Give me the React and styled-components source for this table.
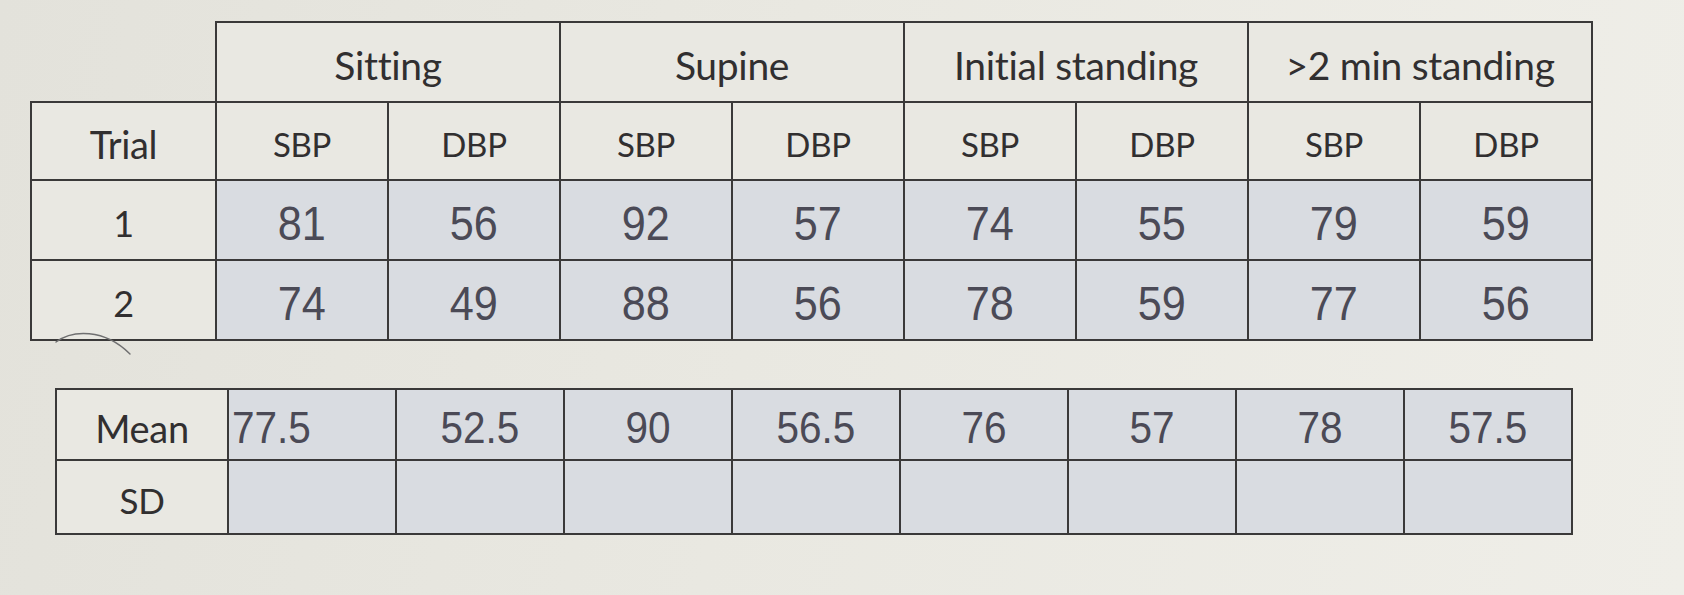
import React from 'react';
import styled, { createGlobalStyle } from 'styled-components';

const GlobalStyle = createGlobalStyle`
  html, body {
    margin: 0;
    padding: 0;
  }
  body {
    width: 1684px;
    height: 595px;
    overflow: hidden;
    background: linear-gradient(100deg, #e3e2db 0%, #e9e8e1 45%, #efeee8 100%);
  }
`;

const groups = ['Sitting', 'Supine', 'Initial standing', '>2 min standing'];

const trials = [
  { label: '1', values: [81, 56, 92, 57, 74, 55, 79, 59] },
  { label: '2', values: [74, 49, 88, 56, 78, 59, 77, 56] },
];

const means = ['77.5', '52.5', '90', '56.5', '76', '57', '78', '57.5'];

const MAIN_LABEL = 185;
const MAIN_COL = 172;
const STAT_LABEL = 172;
const STAT_COL = 168;

const Page = styled.div`
  position: relative;
  width: 1684px;
  height: 595px;
  padding: 21px 0 0 30px;
  box-sizing: border-box;
`;

const Sheet = styled.div`
  display: flex;
  flex-direction: column;
  align-items: flex-start;
  gap: 47px;
`;

const Table = styled.table`
  border-collapse: collapse;
  table-layout: fixed;
  width: ${p => p.$width}px;
  margin-left: ${p => p.$indent || 0}px;
`;

const Cell = styled.td`
  border: 2px solid #3a3939;
  height: ${p => p.$h}px;
  padding: 6px 0 0 ${p => (p.$align === 'left' ? 3 : 0)}px;
  text-align: ${p => p.$align || 'center'};
  vertical-align: middle;
  white-space: nowrap;
  overflow: hidden;
  background: ${p => (p.$data ? '#d9dce1' : '#e9e8e2')};
`;

const BlankCorner = styled.td`
  border: none;
  background: transparent;
`;

const HeadText = styled.span`
  font-family: Lato, 'Open Sans', sans-serif;
  font-size: ${p => p.$size || 39}px;
  color: #312f30;
  letter-spacing: -0.3px;
`;

const Num = styled.span`
  display: inline-block;
  font-family: 'Liberation Sans', Arial, sans-serif;
  font-size: ${p => p.$size || 48}px;
  color: #4b4a56;
  transform: scaleX(0.9);
  transform-origin: ${p => (p.$left ? 'left' : 'center')} center;
`;

const PencilMark = styled.svg`
  position: absolute;
  left: 52px;
  top: 326px;
  width: 90px;
  height: 34px;
  pointer-events: none;
`;

export default function App() {
  return (
    <Page>
      <GlobalStyle />
      <Sheet>
        <Table $width={MAIN_LABEL + MAIN_COL * 8}>
          <colgroup>
            <col style={{ width: MAIN_LABEL }} />
            {Array.from({ length: 8 }).map((_, i) => (
              <col key={i} style={{ width: MAIN_COL }} />
            ))}
          </colgroup>
          <tbody>
            <tr>
              <BlankCorner />
              {groups.map(g => (
                <Cell key={g} colSpan={2} $h={72}>
                  <HeadText>{g}</HeadText>
                </Cell>
              ))}
            </tr>
            <tr>
              <Cell $h={70}>
                <HeadText $size={38}>Trial</HeadText>
              </Cell>
              {groups.map(g => (
                <React.Fragment key={g}>
                  <Cell $h={70}>
                    <HeadText $size={33}>SBP</HeadText>
                  </Cell>
                  <Cell $h={70}>
                    <HeadText $size={33}>DBP</HeadText>
                  </Cell>
                </React.Fragment>
              ))}
            </tr>
            {trials.map(t => (
              <tr key={t.label}>
                <Cell $h={72}>
                  <HeadText $size={36}>{t.label}</HeadText>
                </Cell>
                {t.values.map((v, i) => (
                  <Cell key={i} $h={72} $data>
                    <Num>{v}</Num>
                  </Cell>
                ))}
              </tr>
            ))}
          </tbody>
        </Table>

        <Table $width={STAT_LABEL + STAT_COL * 8} $indent={25}>
          <colgroup>
            <col style={{ width: STAT_LABEL }} />
            {Array.from({ length: 8 }).map((_, i) => (
              <col key={i} style={{ width: STAT_COL }} />
            ))}
          </colgroup>
          <tbody>
            <tr>
              <Cell $h={63}>
                <HeadText $size={38}>Mean</HeadText>
              </Cell>
              {means.map((m, i) => (
                <Cell key={i} $h={63} $data $align={i === 0 ? 'left' : 'center'}>
                  <Num $size={45} $left={i === 0}>{m}</Num>
                </Cell>
              ))}
            </tr>
            <tr>
              <Cell $h={66}>
                <HeadText $size={35}>SD</HeadText>
              </Cell>
              {means.map((_, i) => (
                <Cell key={i} $h={66} $data />
              ))}
            </tr>
          </tbody>
        </Table>
      </Sheet>

      <PencilMark viewBox="0 0 90 34">
        <path d="M4 16 C 20 4, 52 2, 78 28" fill="none" stroke="#6f6f70" strokeWidth="1.4" strokeLinecap="round" />
      </PencilMark>
    </Page>
  );
}
